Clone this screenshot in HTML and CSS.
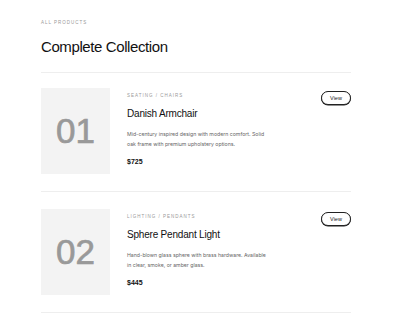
FILE: index.html
```html
<!DOCTYPE html>
<html lang="en">
<head>
  <meta charset="UTF-8" />
  <meta name="viewport" content="width=device-width, initial-scale=1.0"/>
  <title>Complete Collection</title>
  <link rel="stylesheet" href="styles.css">
</head>
<body>
  <div class="page">
    <header class="head">
      <div class="eyebrow">All Products</div>
      <h1>Complete Collection</h1>
    </header>

    <div class="item">
      <div class="thumb">01</div>
      <div class="info">
        <div class="cat">Seating / Chairs</div>
        <h2>Danish Armchair</h2>
        <p class="desc">Mid-century inspired design with modern comfort. Solid oak frame with premium upholstery options.</p>
        <div class="price">$725</div>
      </div>
      <button class="view-btn">View</button>
    </div>

    <div class="item">
      <div class="thumb">02</div>
      <div class="info">
        <div class="cat">Lighting / Pendants</div>
        <h2>Sphere Pendant Light</h2>
        <p class="desc">Hand-blown glass sphere with brass hardware. Available in clear, smoke, or amber glass.</p>
        <div class="price">$445</div>
      </div>
      <button class="view-btn">View</button>
    </div>
  </div>
</body>
</html>
```

FILE: styles.css
```css
body {
  margin: 0;
  font-family: 'Liberation Sans', Arial, sans-serif;
  background: #fff;
  color: #111;
}
.page {
  width: 310px;
  margin-left: 41px;
}
.head {
  padding-top: 20px;
  padding-bottom: 17px;
  border-bottom: 1px solid #eee;
}
.eyebrow {
  font-size: 4.5px;
  letter-spacing: 1px;
  text-transform: uppercase;
  color: #999;
}
h1 {
  margin: 13px 0 0;
  font-size: 15px;
  font-weight: 400;
  letter-spacing: -0.4px;
}
.item {
  display: flex;
  align-items: flex-start;
  padding: 15px 0 17px;
  border-bottom: 1px solid #eee;
}
.item + .item {
  padding-top: 17px;
}
.thumb {
  width: 69px;
  height: 86px;
  background: #f3f3f3;
  color: #999;
  font-size: 35px;
  font-weight: 400;
  -webkit-text-stroke: 0.7px #999;
  display: flex;
  align-items: center;
  justify-content: center;
  flex-shrink: 0;
}
.info {
  flex: 1;
  margin-left: 17px;
  padding-top: 5px;
}
.cat {
  font-size: 4.5px;
  letter-spacing: 1px;
  text-transform: uppercase;
  color: #999;
}
h2 {
  margin: 10px 0 0;
  font-size: 10px;
  font-weight: 400;
  letter-spacing: -0.2px;
}
.desc {
  margin: 10px 0 0;
  max-width: 143px;
  font-family: 'Inter', 'Liberation Sans', sans-serif;
  font-size: 5.2px;
  line-height: 10px;
  color: #666;
}
.price {
  margin-top: 9px;
  font-size: 7px;
  font-weight: 700;
}
.view-btn {
  margin-top: 3px;
  width: 30px;
  height: 14px;
  padding: 0;
  border: 1px solid #222;
  border-radius: 8px;
  background: #fff;
  box-shadow: 0 0.5px 0 #222;
  font-family: inherit;
  font-size: 5.5px;
  color: #222;
  cursor: pointer;
}
```
